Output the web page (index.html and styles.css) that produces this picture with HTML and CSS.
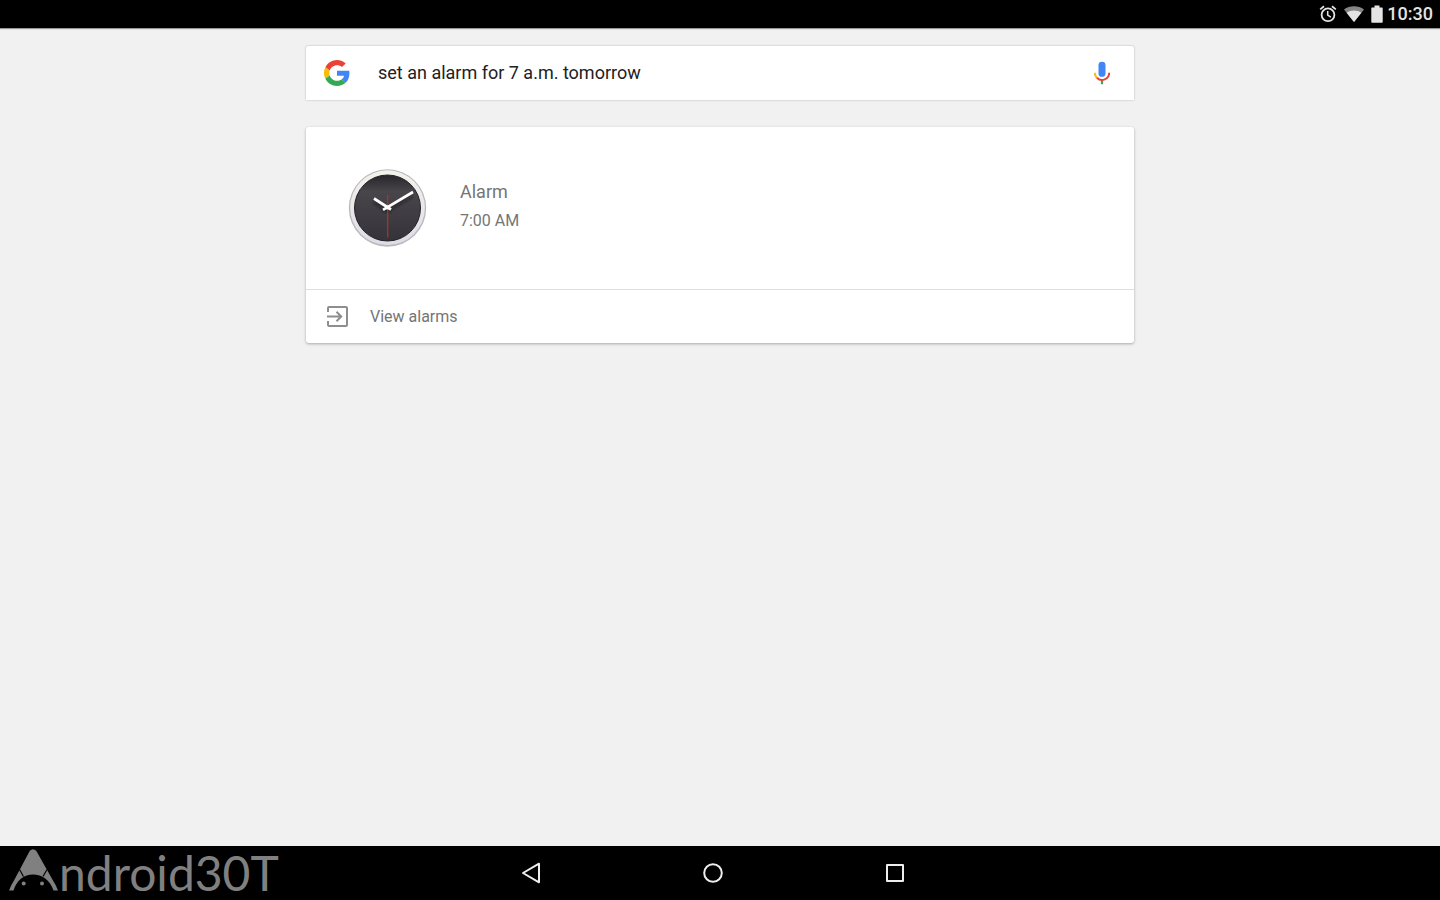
FILE: index.html
```html
<!DOCTYPE html>
<html lang="en">
<head>
<meta charset="utf-8">
<title>Alarm</title>
<meta name="viewport" content="width=device-width, initial-scale=1">
<link rel="stylesheet" href="styles.css">
</head>
<body>
<header class="status">
  <svg class="status-alarm" viewBox="0 0 18 18" width="18" height="18" fill="none" stroke="#e4e4e4" aria-hidden="true">
    <circle cx="9" cy="9.8" r="6.400" stroke-width="1.800"/>
    <path d="M1.200 4.400 5 1.300M16.800 4.400 13 1.300" stroke-width="1.800"/>
    <path d="M8.700 6v4.200l3.200 2" stroke-width="1.500"/>
  </svg>
  <svg class="status-wifi" viewBox="0 0 20 16" width="20" height="16" aria-hidden="true">
    <path d="M0 3.500C5.500-.8 14.500-.8 20 3.500L10 16z" fill="#858585"/>
    <path d="M2.600 6.700C7 3.600 13 3.600 17.400 6.700L10 16z" fill="#e4e4e4"/>
  </svg>
  <svg class="status-battery" viewBox="0 0 12 18" width="12" height="18" aria-hidden="true">
    <path d="M3.500 .5h5v2H11q.700 0 .700.700V17q0 .700-.700.700H1q-.700 0-.700-.700V3.200Q.300 2.500 1 2.500h2.500z" fill="#e4e4e4"/>
  </svg>
  <time class="clock">10:30</time>
</header>

<main class="content">
  <form class="search">
    <svg class="search-logo" viewBox="0 0 48 48" width="26" height="26" role="img" aria-label="Google">
      <path fill="#ea4335" d="M24 9.500c3.540 0 6.710 1.220 9.210 3.600l6.850-6.850C35.900 2.380 30.470 0 24 0 14.620 0 6.510 5.380 2.560 13.220l7.980 6.190C12.430 13.720 17.740 9.500 24 9.500z"/>
      <path fill="#4285f4" d="M46.980 24.550c0-1.570-.15-3.090-.38-4.550H24v9.020h12.940c-.58 2.960-2.260 5.480-4.780 7.180l7.730 6c4.510-4.180 7.090-10.360 7.090-17.650z"/>
      <path fill="#fbbc05" d="M10.530 28.590c-.48-1.450-.76-2.990-.76-4.590s.27-3.140.76-4.590l-7.980-6.190C.92 16.460 0 20.120 0 24c0 3.880.92 7.540 2.560 10.780l7.970-6.190z"/>
      <path fill="#34a853" d="M24 48c6.480 0 11.930-2.130 15.890-5.810l-7.730-6c-2.150 1.450-4.920 2.300-8.160 2.300-6.260 0-11.570-4.220-13.470-9.910l-7.980 6.190C6.510 42.620 14.620 48 24 48z"/>
    </svg>
    <input class="search-input" type="text" value="set an alarm for 7 a.m. tomorrow" aria-label="Search">
    <button class="icon-button" type="button" aria-label="Voice search">
      <svg viewBox="0 0 18 24" width="18" height="24" fill="none" aria-hidden="true">
        <rect x="5.500" y=".800" width="7" height="15" rx="3.400" fill="#4285f4"/>
        <path d="M9 19v4.200" stroke="#34a853" stroke-width="2.200"/>
        <path d="M1.800 11.700a7.200 7.200 0 0 0 2.100 5.100" stroke="#fbbc05" stroke-width="2"/>
        <path d="M3.900 16.800a7.200 7.200 0 0 0 12.300-5.100" stroke="#ea4335" stroke-width="2"/>
      </svg>
    </button>
  </form>

  <section class="card">
    <div class="card-body">
      <svg class="dial" viewBox="0 0 80 80" width="80" height="80" aria-hidden="true">
        <defs>
          <linearGradient id="rim" x1="0" y1="0" x2="0" y2="1">
            <stop offset="0" stop-color="#f3f3ec"/><stop offset="1" stop-color="#dedce6"/>
          </linearGradient>
          <linearGradient id="face" x1="0" y1="0" x2="0" y2="1">
            <stop offset="0" stop-color="#29262b"/><stop offset=".25" stop-color="#48454b"/><stop offset="1" stop-color="#353239"/>
          </linearGradient>
          <filter id="soft"><feGaussianBlur stdDeviation="1.500"/></filter>
        </defs>
        <circle cx="40.500" cy="40" r="38.700" fill="#b9b8bb"/>
        <circle cx="40.500" cy="39.700" r="37.400" fill="url(#rim)"/>
        <circle cx="40.500" cy="40" r="33" fill="url(#face)" stroke="#242126" stroke-width="1"/>
        <path d="M37 44 65 28M27 34l16 10" stroke="#18161a" stroke-opacity=".6" stroke-width="3" filter="url(#soft)"/>
        <path d="M40.700 27v42.500" stroke="#b23324" stroke-width="1.200"/>
        <path d="M27 30.500 44 41.500M36 41.800 66 24" stroke="#fff" stroke-width="2.700"/>
        <circle cx="40.500" cy="39.600" r="2" fill="#fff"/>
      </svg>
      <div class="details">
        <h1 class="title">Alarm</h1>
        <p class="time">7:00 AM</p>
      </div>
    </div>
    <a class="card-action" href="#alarms">
      <svg viewBox="0 0 22 22" width="22" height="22" fill="none" stroke="#8e8e8e" stroke-width="2" aria-hidden="true">
        <path d="M2 6V2q0-1 1-1h17q1 0 1 1v17q0 1-1 1H3q-1 0-1-1v-4"/>
        <path d="M1 10.500h14M10.500 5.800l4.700 4.700-4.700 4.700"/>
      </svg>
      <span>View alarms</span>
    </a>
  </section>
</main>

<footer class="navbar">
  <div class="brand">
    <svg class="brand-mark" viewBox="0 0 50 42" width="50" height="42" aria-hidden="true">
      <path d="M20.800 1.800Q24-1.500 27.200 1.800L44 31.500Q47 36 49 41.500H44.500C41 31 33 25.500 24 25.500S8 31 4.500 41.500H0Q2 36 5 31.500z" fill="#808080"/>
      <path d="M10.500 20.500 14.500 27.500M38 20.500 34 27.500" stroke="#000" stroke-width="1.200"/>
      <circle cx="14.700" cy="34.500" r="2" fill="#808080"/><circle cx="33" cy="34.500" r="2" fill="#808080"/>
    </svg>
    <span class="brand-name">ndroid30T</span>
  </div>
  <nav class="nav-buttons" aria-label="System">
    <button class="icon-button" type="button" aria-label="Back">
      <svg viewBox="0 0 22 22" width="22" height="22" fill="none" stroke="#eee" stroke-width="2" stroke-linejoin="round" aria-hidden="true"><path d="M19 1.700v18.600L3 11z"/></svg>
    </button>
    <button class="icon-button" type="button" aria-label="Home">
      <svg viewBox="0 0 22 22" width="22" height="22" fill="none" stroke="#eee" stroke-width="2" aria-hidden="true"><circle cx="11" cy="11" r="8.800"/></svg>
    </button>
    <button class="icon-button" type="button" aria-label="Recent apps">
      <svg viewBox="0 0 22 22" width="22" height="22" fill="none" stroke="#eee" stroke-width="2" stroke-linejoin="round" aria-hidden="true"><path d="M3 3h16v16H3z"/></svg>
    </button>
  </nav>
</footer>
</body>
</html>
```
FILE: styles.css
```css
* {
  box-sizing: border-box;
}

body {
  margin: 0;
  min-height: 100vh;
  display: flex;
  flex-direction: column;
  background: #f1f1f1;
  color: #757575;
  font-family: Roboto, "Liberation Sans", sans-serif;
}

svg {
  display: block;
  flex: none;
}

.status {
  height: 28px;
  padding: 0 7px;
  display: flex;
  align-items: center;
  justify-content: flex-end;
  background: #000;
  box-shadow: 0 1px 1px #999;
}

.status-wifi {
  margin-left: 7px;
}

.status-battery {
  margin: 0 4px 0 7px;
}

.clock {
  color: #e4e4e4;
  font-size: 18px;
  font-weight: 500;
  line-height: 28px;
}

.content {
  flex: 1;
  width: 100%;
  max-width: 860px;
  margin: 0 auto;
  padding: 18px 16px;
}

.search {
  height: 54px;
  padding: 0 23px 0 18px;
  display: flex;
  align-items: center;
  background: #fff;
  border-radius: 2px 2px 0 0;
  box-shadow: 0 0 2px rgba(0, 0, 0, 0.3);
}

.search-input {
  flex: 1;
  min-width: 0;
  margin-left: 28px;
  padding: 0;
  border: 0;
  outline: 0;
  background: none;
  color: #212121;
  font: 18px/24px Roboto, "Liberation Sans", sans-serif;
}

.icon-button {
  padding: 0;
  border: 0;
  background: none;
  cursor: pointer;
}

.card {
  margin-top: 27px;
  background: #fff;
  border-radius: 3px;
  box-shadow: 0 1px 3px rgba(0, 0, 0, 0.3);
}

.card-body {
  padding: 41px;
  display: flex;
  align-items: center;
}

.details {
  margin-left: 33px;
  padding-bottom: 4px;
}

.title,
.time {
  margin: 0;
  font-weight: 400;
}

.title {
  margin-bottom: 6px;
  font-size: 18px;
  line-height: 24px;
}

.time {
  font-size: 16px;
  line-height: 22px;
}

.card-action {
  height: 54px;
  padding: 0 20px;
  display: flex;
  align-items: center;
  gap: 22px;
  border-top: 1px solid #dedede;
  color: #757575;
  font-size: 16px;
  text-decoration: none;
}

.navbar {
  height: 54px;
  padding-right: 14px;
  display: grid;
  grid-template-columns: 1fr auto 1fr;
  align-items: center;
  background: #000;
}

.brand {
  padding-left: 9px;
  display: flex;
  align-items: center;
  color: #808080;
}

.brand-mark {
  margin-bottom: 6px;
}

.brand-name {
  font-family: Lato, sans-serif;
  font-size: 48px;
  line-height: 54px;
}

.nav-buttons {
  display: grid;
  grid-template-columns: repeat(3, 182px);
  justify-items: center;
}
```
